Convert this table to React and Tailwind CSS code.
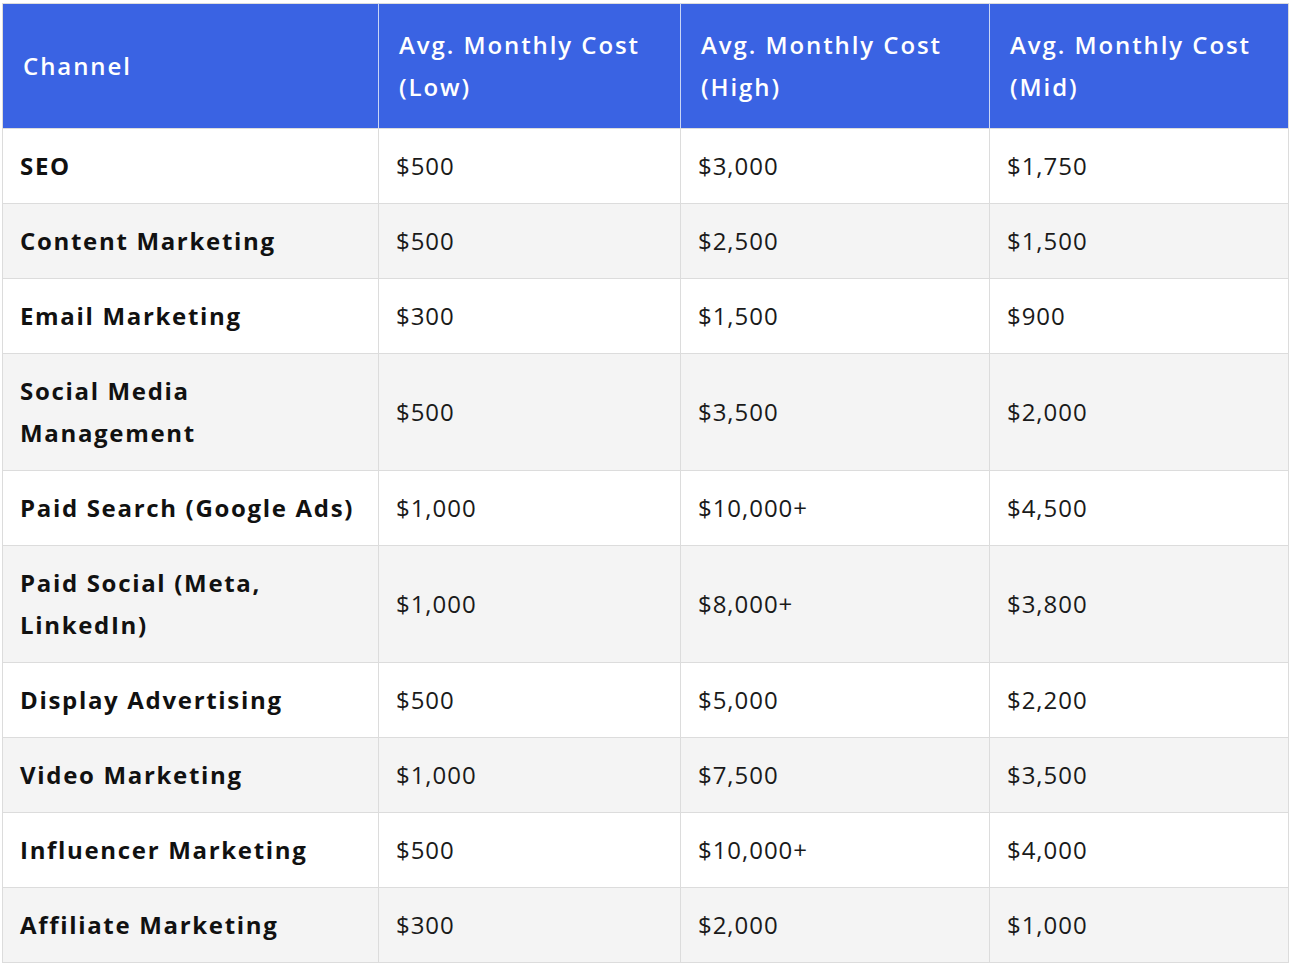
import React from "react";

const ROWS = [
  { name: ["SEO"], low: "$500", high: "$3,000", mid: "$1,750" },
  { name: ["Content Marketing"], low: "$500", high: "$2,500", mid: "$1,500" },
  { name: ["Email Marketing"], low: "$300", high: "$1,500", mid: "$900" },
  { name: ["Social Media", "Management"], low: "$500", high: "$3,500", mid: "$2,000" },
  { name: ["Paid Search (Google Ads)"], low: "$1,000", high: "$10,000+", mid: "$4,500" },
  { name: ["Paid Social (Meta,", "LinkedIn)"], low: "$1,000", high: "$8,000+", mid: "$3,800" },
  { name: ["Display Advertising"], low: "$500", high: "$5,000", mid: "$2,200" },
  { name: ["Video Marketing"], low: "$1,000", high: "$7,500", mid: "$3,500" },
  { name: ["Influencer Marketing"], low: "$500", high: "$10,000+", mid: "$4,000" },
  { name: ["Affiliate Marketing"], low: "$300", high: "$2,000", mid: "$1,000" },
];

const HEADERS = [
  ["Channel"],
  ["Avg. Monthly Cost", "(Low)"],
  ["Avg. Monthly Cost", "(High)"],
  ["Avg. Monthly Cost", "(Mid)"],
];

function Lines({ lines }) {
  return lines.map((l, i) => (
    <React.Fragment key={i}>
      {i > 0 && <br />}
      {l}
    </React.Fragment>
  ));
}

export default function App() {
  return (
    <div
      className="min-h-screen bg-white pt-[3px] pl-[2px]"
      style={{ fontFamily: '"Open Sans", "Liberation Sans", sans-serif' }}
    >
      <table className="w-[1286px] table-fixed border-collapse border border-[#dcdcdc] text-[24px] leading-[42px]">
        <colgroup>
          <col className="w-[376px]" />
          <col className="w-[302px]" />
          <col className="w-[309px]" />
          <col className="w-[299px]" />
        </colgroup>
        <thead>
          <tr className="bg-[#3a63e3] text-white">
            {HEADERS.map((h, i) => (
              <th
                key={i}
                className="px-5 py-5 text-left align-middle font-semibold tracking-[0.08em] border-l border-[#c9d5f6] first:border-l-0 border-b border-b-[#dcdcdc]"
              >
                <Lines lines={h} />
              </th>
            ))}
          </tr>
        </thead>
        <tbody>
          {ROWS.map((r, i) => (
            <tr key={i} className={i % 2 === 1 ? "bg-[#f4f4f4]" : "bg-white"}>
              <td className="px-[17px] py-4 align-middle font-bold tracking-[0.07em] text-[#111] border border-[#dcdcdc]">
                <Lines lines={r.name} />
              </td>
              <td className="px-[17px] py-4 align-middle tracking-[0.04em] text-[#1a1a1a] border border-[#dcdcdc]">{r.low}</td>
              <td className="px-[17px] py-4 align-middle tracking-[0.04em] text-[#1a1a1a] border border-[#dcdcdc]">{r.high}</td>
              <td className="px-[17px] py-4 align-middle tracking-[0.04em] text-[#1a1a1a] border border-[#dcdcdc]">{r.mid}</td>
            </tr>
          ))}
        </tbody>
      </table>
    </div>
  );
}
